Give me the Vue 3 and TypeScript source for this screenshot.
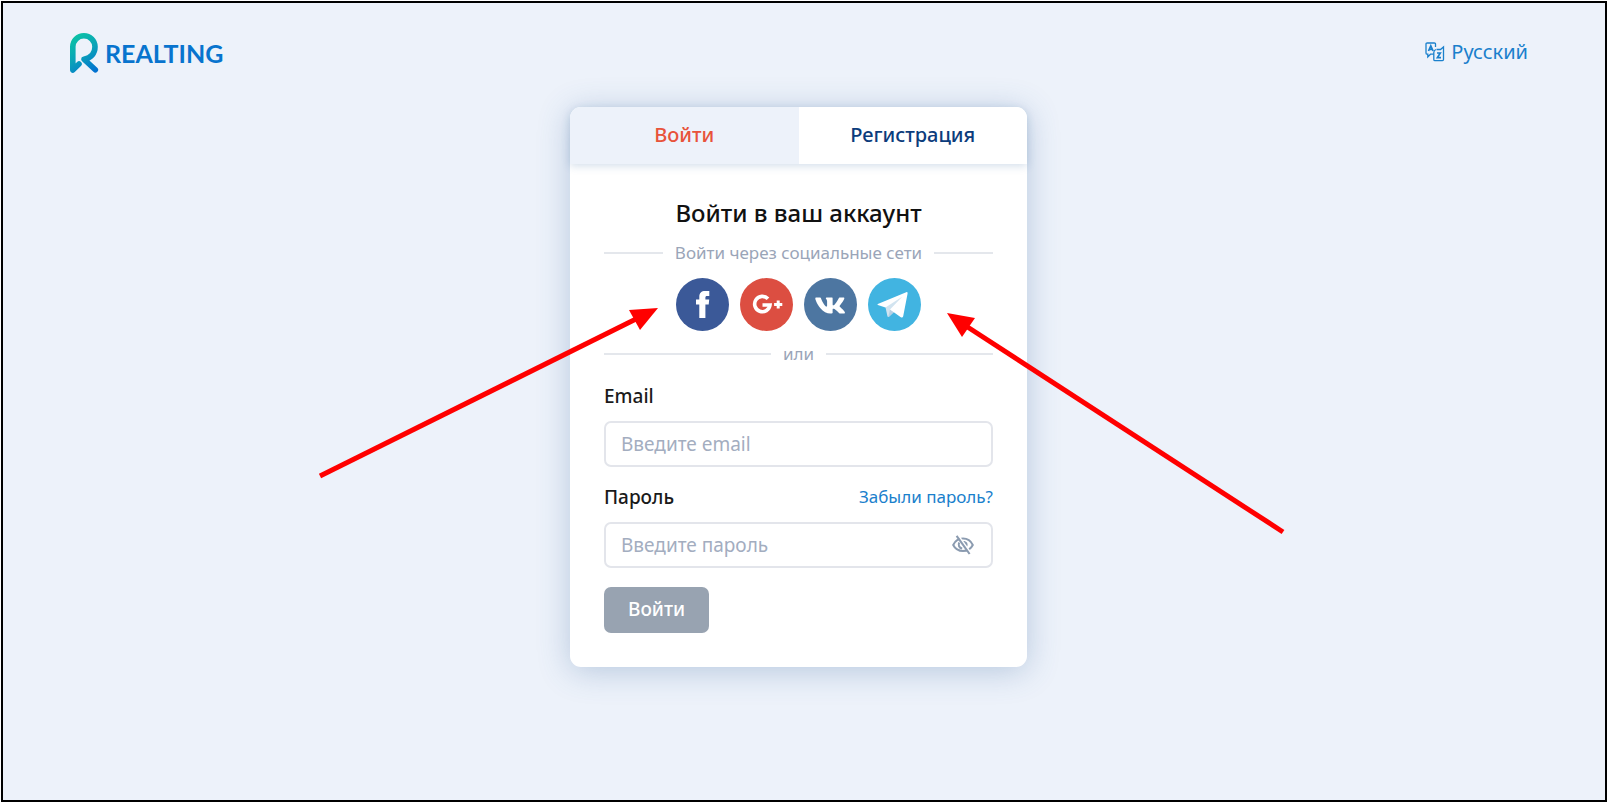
<script setup lang="ts">
import { ref } from 'vue'

const email = ref('')
const password = ref('')
const revealed = ref(false)
</script>

<template>
  <div class="page">
    <header class="header">
      <a class="logo" href="#" aria-label="Realting">
        <svg width="30" height="42" viewBox="69 32 30 42" fill="none" aria-hidden="true">
          <defs>
            <linearGradient id="mark" x1="72" y1="36" x2="96" y2="70" gradientUnits="userSpaceOnUse">
              <stop offset="0" stop-color="#0cc4a4" />
              <stop offset="0.5" stop-color="#0aa3b8" />
              <stop offset="1" stop-color="#0272d0" />
            </linearGradient>
          </defs>
          <path d="M79 64 L72.8 70 V46.8 A11.1 11.1 0 0 1 95 46.8 C95 53.5 91 58 84 59.2 L95.3 69.8" stroke="url(#mark)" stroke-width="5.6" stroke-linecap="round" stroke-linejoin="round" />
        </svg>
        <span>REALTING</span>
      </a>
      <a class="language" href="#">
        <svg width="20" height="20" viewBox="0 0 20 20" fill="none" stroke="currentColor" stroke-width="1.3" aria-hidden="true">
          <path d="M10.5 5 V2.2 Q10.5 1 9.3 1 H2.2 Q1 1 1 2.2 V11 Q1 12.2 2.2 12.2 H2.8 V15 L5.5 12.2 H8.8" />
          <path d="M3.5 9 L5.8 3.8 L8.1 9 M4.5 7.4 H7.1" stroke-width="1.7" />
          <path d="M11.5 7.5 H15.5 L18.5 5 V17.5 Q18.5 18.6 17.4 18.6 H10 Q8.8 18.6 8.8 17.4 V10.5 Q8.8 8.5 10.8 7.5" />
          <path d="M12 11 H15.3 L12.4 15.6 H16" stroke-width="1.7" />
        </svg>
        Русский
      </a>
    </header>

    <main class="card">
      <nav class="tabs">
        <button type="button" class="tab active">Войти</button>
        <button type="button" class="tab">Регистрация</button>
      </nav>
      <form class="form" @submit.prevent>
        <h1>Войти в ваш аккаунт</h1>
        <div class="divider">Войти через социальные сети</div>
        <div class="socials">
          <button type="button" aria-label="Facebook">
            <svg viewBox="0 0 53 53"><circle cx="26.5" cy="26.5" r="26.5" fill="#3b5998" /><path fill="#fff" d="M23.3 40 V26.6 H20 V21.6 H23.3 V18.8 C23.3 14.8 25.5 13 29 13 H33.3 V18 H31 C29.8 18 29.4 18.6 29.4 19.8 V21.6 H33.2 L32.7 26.6 H29.4 V40Z" /></svg>
          </button>
          <button type="button" aria-label="Google Plus">
            <svg viewBox="0 0 53 53"><circle cx="26.5" cy="26.5" r="26.5" fill="#dc4e41" /><path fill="none" stroke="#fff" stroke-width="3.6" d="M28 20.8 A7.7 7.7 0 1 0 30 27 H22.5" /><path fill="none" stroke="#fff" stroke-width="3" d="M38.2 22.4 V30.6 M34.1 26.5 H42.3" /></svg>
          </button>
          <button type="button" aria-label="ВКонтакте">
            <svg viewBox="0 0 53 53"><circle cx="26.5" cy="26.5" r="26.5" fill="#4d76a1" /><path fill="#fff" transform="translate(10.3 14.8) scale(.055 .05)" d="M545 117.7c3.7-12.5 0-21.7-17.8-21.7h-58.9c-15 0-21.9 7.9-25.6 16.7 0 0-30 73.1-72.4 120.5-13.7 13.7-20 18.1-27.5 18.1-3.7 0-9.4-4.4-9.4-16.9V117.7c0-15-4.2-21.7-16.6-21.7h-92.6c-9.4 0-15 7-15 13.5 0 14.2 21.2 17.5 23.4 57.5v86.8c0 19-3.4 22.5-10.9 22.5-20 0-68.6-73.4-97.4-157.4-5.8-16.3-11.5-22.9-26.6-22.9H38.8c-16.8 0-20.2 7.9-20.2 16.7 0 15.6 20 93.1 93.1 195.5C160.4 378.1 229 416 291.4 416c37.5 0 42.1-8.4 42.1-22.9 0-66.8-3.4-73.1 15.4-73.1 8.7 0 23.7 4.4 58.7 38.1 40 40 46.6 57.9 69 57.9h58.9c16.8 0 25.3-8.4 20.4-25-11.2-34.9-86.9-106.7-90.3-111.5-8.7-11.2-6.2-16.2 0-26.2.1-.1 72-101.3 79.4-135.6z" /></svg>
          </button>
          <button type="button" aria-label="Telegram">
            <svg viewBox="0 0 53 53"><circle cx="26.5" cy="26.5" r="26.5" fill="#41b4e1" /><path fill="#d2e4f0" d="M17.3 28.5 L19.5 38.6 Q20.3 39.4 21.2 38.5 L26 34 L37 16Z" /><path fill="#b5cfe4" d="M20.3 38.8 L22 31.5 L26 34 L21.2 38.5Z" /><path fill="#fff" d="M9.8 26 L38.2 14.2 Q39.8 13.8 39.6 15.5 L35.2 38.3 Q34.6 40.2 32.8 39.2 L22 31.6 L34.2 18.8 L17.4 29.4 L9.9 27Q9 26.5 9.8 26Z" /></svg>
          </button>
        </div>
        <div class="divider">или</div>

        <div class="label-row"><label for="email">Email</label></div>
        <input id="email" v-model="email" class="field" type="email" placeholder="Введите email" />

        <div class="label-row">
          <label for="password">Пароль</label>
          <a href="#">Забыли пароль?</a>
        </div>
        <div class="field password">
          <input id="password" v-model="password" :type="revealed ? 'text' : 'password'" placeholder="Введите пароль" />
          <button type="button" aria-label="Показать пароль" @click="revealed = !revealed">
            <svg width="22" height="20" viewBox="0 0 22 20" fill="none" stroke="currentColor" stroke-width="2" aria-hidden="true">
              <path d="M1.2 10 C3.5 5.2 7 3.6 11 3.6 C15 3.6 18.5 5.2 20.8 10 C18.5 14.6 15 16 11 16 C7 16 3.5 14.6 1.2 10Z" />
              <path d="M7.2 7.5 C6 10 7 13 10.2 13.4" />
              <path d="M10 6.2 C14 5.4 16.6 8 15.2 11.6 L13.6 12.4Z" fill="currentColor" stroke="none" />
              <path d="M6.3 0.5 L18.8 18" stroke="#fff" stroke-width="1.8" />
              <path d="M4.6 0.8 L17.6 19" stroke-width="2.1" />
            </svg>
          </button>
        </div>
        <button type="submit" class="submit">Войти</button>
      </form>

      <svg class="arrows" width="456" height="560" viewBox="570 107 456 560" fill="#f00" stroke="#f00" aria-hidden="true">
        <path d="M320 476 L636 319" stroke-width="5" />
        <path d="M658 308 L629 310 L640 330Z" stroke="none" />
        <path d="M1283 532 L966 326" stroke-width="5" />
        <path d="M947 313 L975 318 L962 337Z" stroke="none" />
      </svg>
    </main>
  </div>
</template>

<style>
body {
  margin: 0;
  background: #fff;
}
</style>

<style scoped>
* {
  box-sizing: border-box;
}
.page {
  min-height: calc(100vh - 2px);
  margin: 1px;
  padding: 0 77px 0 66px;
  border: 2px solid #000;
  background: #edf2fa;
  font-family: "Noto Sans", "Open Sans", sans-serif;
  font-size: 19px;
  line-height: 24px;
  color: #1a1a1a;
  overflow: hidden;
}
a {
  color: #1a80cc;
  text-decoration: none;
}
button,
input {
  font: inherit;
}
button {
  border: 0;
  padding: 0;
  background: none;
  cursor: pointer;
}
.header {
  display: flex;
  align-items: center;
  justify-content: space-between;
  height: 100px;
}
.logo,
.language {
  display: flex;
  align-items: center;
}
.logo {
  gap: 6px;
  font-family: Lato, sans-serif;
  font-size: 25px;
  font-weight: 700;
  color: #0874ce;
}
.language {
  gap: 6px;
  padding-bottom: 2px;
  font-size: 20px;
}
.card {
  position: relative;
  width: 100%;
  max-width: 457px;
  margin: 4px auto 0;
  border-radius: 11px;
  background: #fff;
  box-shadow: 0 4px 32px rgba(56, 103, 160, 0.3);
}
.tabs {
  display: flex;
  border-radius: 11px 11px 0 0;
  overflow: hidden;
  box-shadow: 0 2px 8px rgba(56, 103, 160, 0.22);
}
.tab {
  flex: 1;
  height: 57px;
  padding-bottom: 2px;
  background: #fff;
  color: #0c3c7c;
  font-size: 20px;
  font-weight: 500;
}
.tab.active {
  background: #edf2fa;
  color: #e8533a;
}
.form {
  display: flex;
  flex-direction: column;
  padding: 33px 34px 34px;
}
h1 {
  margin: 0 0 12px;
  font-size: 24px;
  line-height: 32px;
  font-weight: 500;
  text-align: center;
  color: #111;
}
.divider {
  display: flex;
  align-items: center;
  gap: 12px;
  font-size: 17px;
  color: #9aa5b8;
}
.divider::before,
.divider::after {
  content: "";
  flex: 1;
  height: 2px;
  background: #e4e7ec;
}
.socials {
  display: flex;
  justify-content: center;
  gap: 11px;
  padding: 13px 0 11px;
}
.socials button {
  width: 53px;
  height: 53px;
}
.socials svg {
  display: block;
}
.label-row {
  display: flex;
  justify-content: space-between;
  margin: 18px 0 13px;
  font-weight: 500;
}
.label-row a {
  font-size: 17px;
  font-weight: 400;
}
.field {
  width: 100%;
  height: 46px;
  padding: 0 15px;
  border: 2px solid #e3e5eb;
  border-radius: 7px;
  background: #fff;
  color: #1a1a1a;
}
.password {
  display: flex;
  align-items: center;
}
.password input {
  flex: 1;
  min-width: 0;
  padding: 0;
  border: 0;
  outline: 0;
  background: none;
}
.password button {
  height: 20px;
  margin-right: 2px;
  color: #8b9bb0;
}
.password svg {
  display: block;
}
input::placeholder {
  color: #a3adbf;
  opacity: 1;
}
.submit {
  align-self: flex-start;
  height: 46px;
  margin-top: 19px;
  padding: 0 24px 2px;
  border-radius: 7px;
  background: #98a3b1;
  color: #fff;
  font-weight: 500;
}
.arrows {
  position: absolute;
  top: 0;
  left: 0;
  overflow: visible;
  pointer-events: none;
}
</style>
